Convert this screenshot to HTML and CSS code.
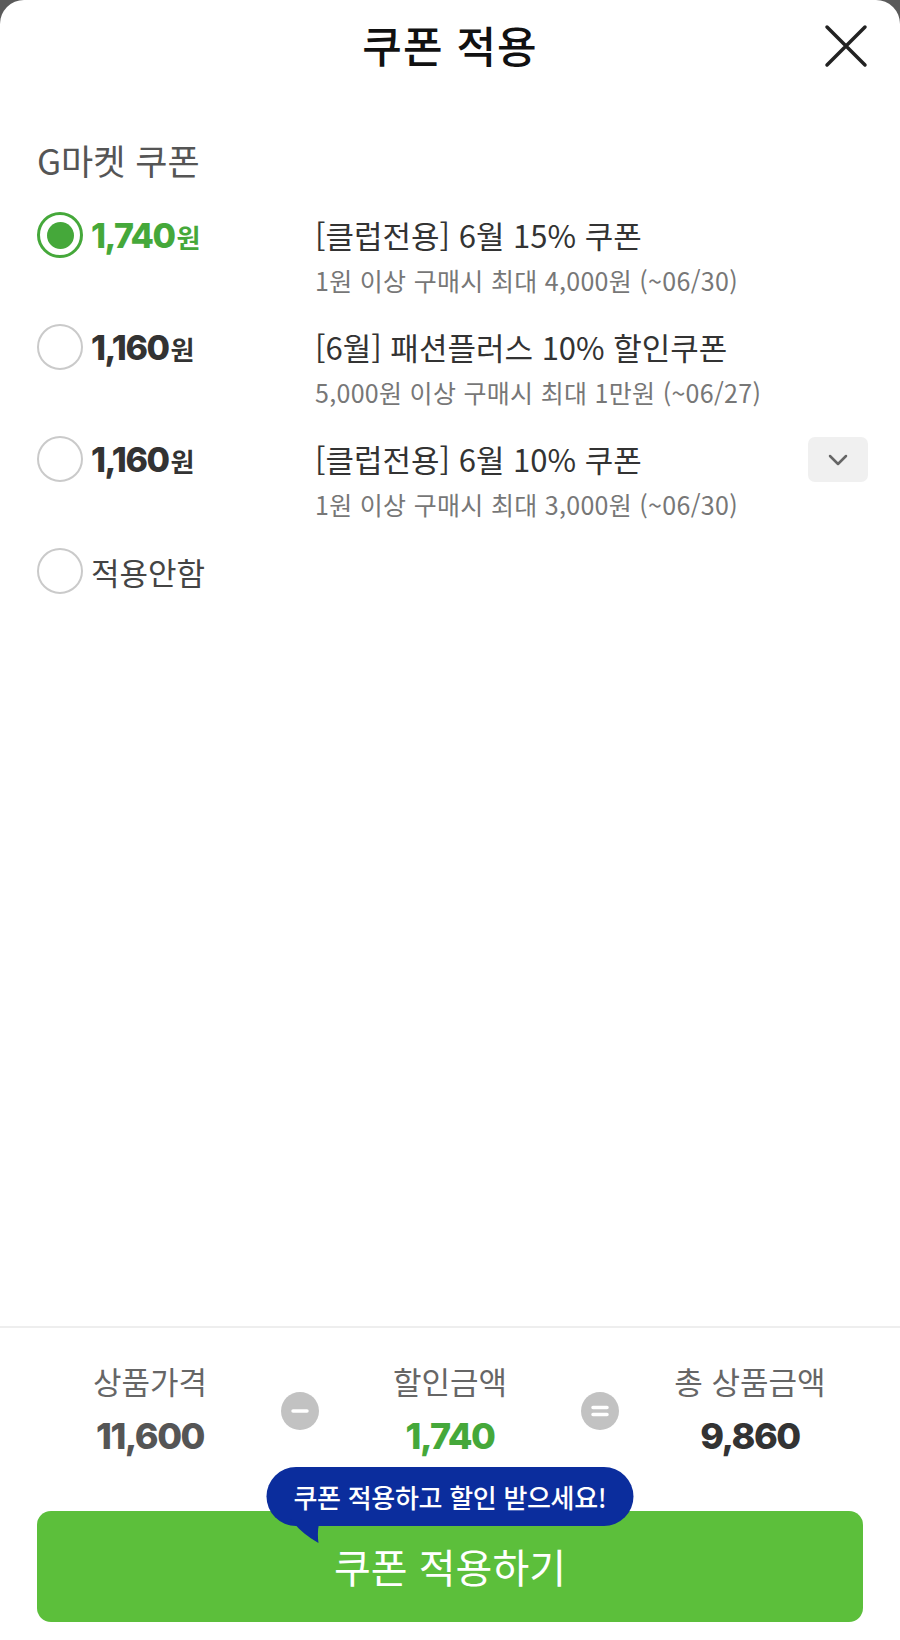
FILE: index.html
```html
<!DOCTYPE html>
<html lang="ko">
<head>
    <meta charset="UTF-8">
    <meta name="viewport" content="width=device-width, initial-scale=1.0">
    <title>쿠폰 적용</title>
    <link rel="stylesheet" href="styles.css">
</head>
<body>

    <div class="sheet">
        <div class="header">
            <h1>쿠폰 적용</h1>
            <button class="close-btn" aria-label="닫기">
                <svg width="46" height="46" viewBox="0 0 46 46">
                    <path d="M4 4 L42 42 M42 4 L4 42" stroke="#222" stroke-width="3.5" stroke-linecap="round" fill="none"/>
                </svg>
            </button>
        </div>

        <div class="coupon-section">
            <h2 class="section-title">G마켓 쿠폰</h2>

            <div class="coupon-list">
                <div class="coupon-row selected">
                    <div class="amount-col">
                        <span class="radio"></span>
                        <span class="amount">1,740<small>원</small></span>
                    </div>
                    <div class="desc-col">
                        <div class="coupon-name">[클럽전용] 6월 15% 쿠폰</div>
                        <div class="coupon-cond">1원 이상 구매시 최대 4,000원 (~06/30)</div>
                    </div>
                    <div class="extra-col"></div>
                </div>

                <div class="coupon-row">
                    <div class="amount-col">
                        <span class="radio"></span>
                        <span class="amount">1,160<small>원</small></span>
                    </div>
                    <div class="desc-col">
                        <div class="coupon-name">[6월] 패션플러스 10% 할인쿠폰</div>
                        <div class="coupon-cond">5,000원 이상 구매시 최대 1만원 (~06/27)</div>
                    </div>
                    <div class="extra-col"></div>
                </div>

                <div class="coupon-row">
                    <div class="amount-col">
                        <span class="radio"></span>
                        <span class="amount">1,160<small>원</small></span>
                    </div>
                    <div class="desc-col">
                        <div class="coupon-name">[클럽전용] 6월 10% 쿠폰</div>
                        <div class="coupon-cond">1원 이상 구매시 최대 3,000원 (~06/30)</div>
                    </div>
                    <div class="extra-col">
                        <button class="more-btn" aria-label="더보기">
                            <svg width="22" height="14" viewBox="0 0 22 14">
                                <path d="M3 3 L11 11 L19 3" stroke="#666" stroke-width="2.5" stroke-linecap="round" stroke-linejoin="round" fill="none"/>
                            </svg>
                        </button>
                    </div>
                </div>

                <div class="coupon-row none-row">
                    <div class="amount-col">
                        <span class="radio"></span>
                        <span class="none-label">적용안함</span>
                    </div>
                </div>
            </div>
        </div>

        <div class="bottom">
            <div class="summary">
                <div class="sum-item">
                    <div class="sum-label">상품가격</div>
                    <div class="sum-value">11,600</div>
                </div>
                <div class="operator">
                    <svg width="40" height="40" viewBox="0 0 40 40">
                        <circle cx="20" cy="20" r="19" fill="#c2c2c2"/>
                        <path d="M13 20 H27" stroke="#fff" stroke-width="3.5" stroke-linecap="round"/>
                    </svg>
                </div>
                <div class="sum-item">
                    <div class="sum-label">할인금액</div>
                    <div class="sum-value discount">1,740</div>
                </div>
                <div class="operator">
                    <svg width="40" height="40" viewBox="0 0 40 40">
                        <circle cx="20" cy="20" r="19" fill="#c2c2c2"/>
                        <path d="M13 16.5 H27 M13 23.5 H27" stroke="#fff" stroke-width="3.5" stroke-linecap="round"/>
                    </svg>
                </div>
                <div class="sum-item">
                    <div class="sum-label">총 상품금액</div>
                    <div class="sum-value total">9,860</div>
                </div>
            </div>

            <div class="apply-wrap">
                <div class="tooltip">
                    쿠폰 적용하고 할인 받으세요!
                    <svg class="tooltip-tail" width="34" height="24" viewBox="0 0 34 24">
                        <path d="M0 0 C6 8 14 16 28 24 C27 16 27 8 30 0 Z" fill="#0b2d9d"/>
                    </svg>
                </div>
                <button class="apply-btn">쿠폰 적용하기</button>
            </div>
        </div>
    </div>

</body>
</html>
```

FILE: styles.css
```css
body {
    margin: 0;
    padding: 0;
    background-color: #5a5a5a;
    font-family: "Noto Sans CJK KR", "Noto Sans", sans-serif;
    color: #333;
}

.sheet {
    background-color: #fff;
    border-radius: 24px 24px 0 0;
    min-height: 1640px;
    display: flex;
    flex-direction: column;
}

.header {
    position: relative;
    height: 88px;
    display: flex;
    justify-content: center;
    align-items: center;
}

h1 {
    margin: 0;
    font-size: 43px;
    font-weight: 500;
    color: #111;
    letter-spacing: 1px;
}

.close-btn {
    position: absolute;
    right: 31px;
    top: 23px;
    padding: 0;
    border: none;
    background: none;
    cursor: pointer;
}

.coupon-section {
    padding: 52px 32px 0 37px;
}

.section-title {
    margin: 0 0 35px;
    font-size: 35px;
    line-height: 40px;
    font-weight: 400;
    color: #555;
    letter-spacing: 0;
}

.coupon-list {
    display: flex;
    flex-direction: column;
    gap: 30px;
}

.coupon-row {
    display: grid;
    grid-template-columns: 278px 1fr 60px;
}

.amount-col {
    display: flex;
    align-items: center;
    height: 40px;
    gap: 8px;
}

.radio {
    box-sizing: border-box;
    width: 46px;
    height: 46px;
    border-radius: 50%;
    border: 2.5px solid #cacaca;
    flex-shrink: 0;
    display: flex;
    align-items: center;
    justify-content: center;
}

.selected .radio {
    border: 3px solid #45a83a;
}

.selected .radio::after {
    content: "";
    width: 27px;
    height: 27px;
    border-radius: 50%;
    background-color: #45a83a;
}

.amount {
    font-family: "Inter", "Noto Sans CJK KR", sans-serif;
    font-size: 34px;
    font-weight: 800;
    letter-spacing: -1.5px;
    color: #333;
}

.amount small {
    font-family: "Noto Sans CJK KR", sans-serif;
    font-size: 26px;
    font-weight: 700;
    letter-spacing: 0;
    margin-left: 2px;
}

.selected .amount {
    color: #45a83a;
}

.none-label {
    font-size: 31px;
    color: #444;
    letter-spacing: 0;
}

.coupon-name {
    font-size: 31px;
    line-height: 40px;
    color: #333;
    letter-spacing: 0;
}

.coupon-cond {
    margin-top: 8px;
    font-size: 25px;
    line-height: 34px;
    color: #777;
    letter-spacing: 0.3px;
}

.more-btn {
    width: 60px;
    height: 45px;
    margin-top: -2px;
    border: none;
    border-radius: 7px;
    background-color: #f0f0f0;
    display: flex;
    align-items: center;
    justify-content: center;
    padding: 0;
}

.bottom {
    margin-top: auto;
    border-top: 2px solid #eeeeee;
    padding-bottom: 18px;
}

.summary {
    display: flex;
    align-items: center;
    padding-top: 36px;
}

.sum-item {
    flex: 1;
    text-align: center;
}

.operator {
    width: 40px;
    height: 40px;
    margin: 0 -20px;
    position: relative;
    z-index: 1;
    align-self: flex-start;
    margin-top: 27px;
}

.sum-label {
    font-size: 31px;
    line-height: 34px;
    color: #666;
    letter-spacing: 0;
}

.sum-value {
    margin-top: 16px;
    font-family: "Inter", "Noto Sans CJK KR", sans-serif;
    font-size: 36px;
    line-height: 44px;
    font-weight: 800;
    letter-spacing: -1.5px;
    color: #555;
}

.sum-value.discount {
    color: #45a83a;
}

.sum-value.total {
    color: #333;
}

.apply-wrap {
    position: relative;
    margin: 53px 37px 0;
}

.apply-btn {
    display: block;
    width: 100%;
    height: 111px;
    border: none;
    border-radius: 14px;
    background-color: #5cbf3b;
    color: #fff;
    font-family: "Noto Sans CJK KR", sans-serif;
    font-size: 40px;
    font-weight: 400;
    letter-spacing: 0;
    padding-top: 0;
}

.tooltip {
    position: absolute;
    top: -44px;
    left: 50%;
    transform: translateX(-50%);
    z-index: 2;
    height: 59px;
    line-height: 59px;
    padding: 0 27px;
    border-radius: 30px;
    background-color: #0b2d9d;
    color: #fff;
    font-size: 26px;
    font-weight: 500;
    letter-spacing: -0.3px;
    white-space: nowrap;
}

.tooltip-tail {
    position: absolute;
    left: 24px;
    top: 52px;
}
```
